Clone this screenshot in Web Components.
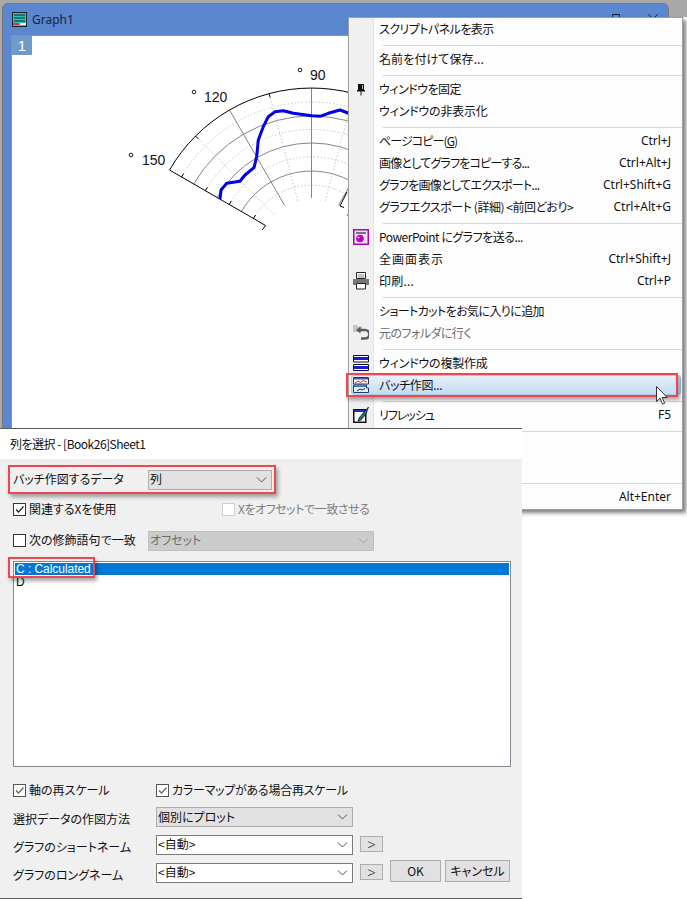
<!DOCTYPE html>
<html lang="ja"><head><meta charset="utf-8"><title>Batch plot</title>
<style>html,body{margin:0;padding:0;background:#fff}</style></head>
<body>
<desk-canvas>
  <graph-window title-text="Graph1"><polar-plot></polar-plot></graph-window>
  <context-menu>
    <menu-item style="--ls:-.55px">スクリプトパネルを表示</menu-item>
    <menu-sep></menu-sep>
    <menu-item style="--ls:.1px">名前を付けて保存...</menu-item>
    <menu-sep></menu-sep>
    <menu-item style="--ls:-.5px"><svg slot="icon" width="16" height="16" viewBox="0 0 16 16"><path d="M5 3h6v6H5z" fill="#111"/><path d="M9 4h1v4H9z" fill="#bbb"/><path d="M4 9h8v1.500H4z" fill="#111"/><path d="M7.500 10h1v4.500h-1z" fill="#222"/></svg>ウィンドウを固定</menu-item>
    <menu-item style="--ls:-.2px">ウィンドウの非表示化</menu-item>
    <menu-sep></menu-sep>
    <menu-item style="--ls:-.9px" shortcut="Ctrl+J">ページコピー(<u>G</u>)</menu-item>
    <menu-item style="--ls:-.8px" shortcut="Ctrl+Alt+J">画像としてグラフをコピーする...</menu-item>
    <menu-item style="--ls:-.7px" shortcut="Ctrl+Shift+G">グラフを画像としてエクスポート...</menu-item>
    <menu-item style="--ls:-.45px" shortcut="Ctrl+Alt+G">グラフエクスポート (詳細) &lt;前回どおり&gt;</menu-item>
    <menu-sep></menu-sep>
    <menu-item style="--ls:-.5px"><svg slot="icon" width="16" height="16" viewBox="0 0 16 16"><rect x=".75" y=".75" width="14.500" height="14.500" fill="#e9e4ef" stroke="#b000b8" stroke-width="1.500"/><rect x="3" y="3" width="10" height="2" fill="#777"/><circle cx="7" cy="9.500" r="3.800" fill="#c400c4"/><circle cx="5.500" cy="8.500" r="1" fill="#f4c0f4"/></svg>PowerPoint にグラフを送る...</menu-item>
    <menu-item style="--ls:1px" shortcut="Ctrl+Shift+J">全画面表示</menu-item>
    <menu-item style="--ls:.2px" shortcut="Ctrl+P"><svg slot="icon" width="16" height="18" viewBox="0 0 16 18"><path d="M3.500 .5h9v6h-9z" fill="#fff" stroke="#222"/><path d="M5 3h6M5 5h6" stroke="#888"/><path d="M0 7h16v6H0z" fill="#777"/><path d="M3.500 11.500h9v5.500h-9z" fill="#fff" stroke="#222"/></svg>印刷...</menu-item>
    <menu-sep></menu-sep>
    <menu-item style="--ls:-.6px">ショートカットをお気に入りに追加</menu-item>
    <menu-item style="--ls:-.55px" disabled><svg slot="icon" width="16" height="16" viewBox="0 0 16 16"><path d="M0 0h4l1 1.500h4V7H0z" fill="#c4c4c4"/><path d="M6 5h6a3 3 0 0 1 0 8.500H8" fill="none" stroke="#5c5c5c" stroke-width="2.500"/><path d="M7.500 1.500v7L3 5z" fill="#5c5c5c"/></svg>元のフォルダに行く</menu-item>
    <menu-sep></menu-sep>
    <menu-item style="--ls:-.2px"><svg slot="icon" width="16" height="16" viewBox="0 0 16 16"><path d="M.5.500h15v6.500H.5zM.5 9.500h15V15.500H.5z" fill="#fff" stroke="#111"/><path d="M1 2h14v3H1zM1 11h14v3H1z" fill="#1818e0"/></svg>ウィンドウの複製作成</menu-item>
    <menu-item style="--ls:-.3px" hot><svg slot="icon" width="16" height="16" viewBox="0 0 16 16"><path d="M.5.500h15V7H.5z" fill="#fff" stroke="#334"/><path d="M1 1h14v1.500H1z" fill="#3d5fa8"/><path d="M2 6l3-2 2.500 1.500L10 3.500l4 1.500" fill="none" stroke="#d03030"/><path d="M.5 8h13v3h2v4.500H.5z" fill="#eaf2fb" stroke="#1c3a78"/><path d="M1 8.500h12v1.500H1z" fill="#3d6fc8"/><path d="M4 14l3-2 2 1 3-1.500" fill="none" stroke="#222"/></svg>バッチ作図...</menu-item>
    <menu-sep></menu-sep>
    <menu-item style="--ls:-1px" shortcut="F5"><svg slot="icon" width="16" height="16" viewBox="0 0 16 16"><path d="M.75 2.750h12V15.250h-12z" fill="#fff" stroke="#111" stroke-width="1.500"/><path d="M1 3h11.500v2H1z" fill="#1c2ec0"/><path d="M15.500 0L11 5l-5 6-1 3 3-1 5-6z" fill="#1d6f80" stroke="#111" stroke-width=".7"/></svg>リフレッシュ</menu-item>
    <menu-sep></menu-sep>
    <menu-item></menu-item>
    <menu-item></menu-item>
    <menu-sep></menu-sep>
    <menu-item shortcut="Alt+Enter"></menu-item>
  </context-menu>
  <batch-dialog></batch-dialog>
</desk-canvas>
<script>
const def=(name,html,init)=>customElements.define(name,class extends HTMLElement{
  constructor(){super();const t=document.createElement('template');t.innerHTML=typeof html==='function'?html(this):html;
    this.attachShadow({mode:'open'}).appendChild(t.content.cloneNode(true));}
  connectedCallback(){init&&init(this)}
});
const chevron=c=>`<svg width="11" height="6" viewBox="0 0 11 6"><path d="M1 .5l4.500 4.500L10 .5" fill="none" stroke="${c}" stroke-width="1"/></svg>`;

def('desk-canvas',`<style>
:host{display:block;position:relative;width:687px;height:899px;overflow:hidden;
font:12px/16px "Noto Sans CJK JP","Noto Sans",sans-serif;font-feature-settings:"palt";color:#111;
background:linear-gradient(#a9a9a9,#a9a9a9) 0 0/100% 17px no-repeat,linear-gradient(#a9a9a9,#a9a9a9) 0 0/2px 428px no-repeat,#fff}
</style><slot></slot>`);

def('graph-window',h=>`<style>
:host{display:flex;flex-direction:column;position:absolute;left:2px;top:3px;width:667px;height:440px;box-sizing:border-box;background:#5a87d0;border:1px solid #777;border-radius:6px 6px 0 0;padding:0 1px 0 8px}
.bar{display:flex;height:31px;flex:none;align-items:center;gap:5px;padding-left:1px}
.bar b{font-weight:400;color:#15233f;flex:1;font-family:"Noto Sans",sans-serif}
.ctl{align-self:flex-start;margin-top:10px;display:flex;gap:28px;margin-right:9px}
.client{position:relative;flex:1;min-height:0;background:#fff;border:1px solid #8f8f8f;border-bottom:0}
</style>
<div class="bar"><svg width="15" height="15" viewBox="0 0 15 15"><rect x=".5" y=".5" width="14" height="14" fill="#27c4b8" stroke="#222"/><path d="M2 3h11M2 6h11M2 9h11" stroke="#123" /><path d="M1 12h6" stroke="#e03050" stroke-width="2"/><path d="M8 12h6" stroke="#dfe" stroke-width="2"/></svg>
<b>${h.getAttribute('title-text')}</b>
<span class="ctl"><svg width="8" height="10" viewBox="0 0 8 10"><path d="M.5.500h7v9h-7z" fill="none" stroke="#15233f"/></svg><svg width="10" height="10" viewBox="0 0 10 10"><path d="M.5.500l9 9M9.500.500l-9 9" stroke="#15233f"/></svg></span></div>
<div class="client"><slot></slot></div>`);

def('polar-plot',()=>{
  const cx=311.5,cy=252,P=(r,a)=>{const t=a*Math.PI/180;return [(cx+r*Math.cos(t)).toFixed(1),(cy-r*Math.sin(t)).toFixed(1)]};
  const arc=(r,a,b)=>{const s=P(r,a),e=P(r,b);return `M${s}A${r} ${r} 0 0 1 ${e}`};
  let g='';
  for(const r of [150,122.500,95,67]) g+=`<path d="${arc(r,150,30)}" fill="none" stroke="#bdbdbd" stroke-width=".9" stroke-dasharray="1.500 2"/>`;
  for(const a of [135,105,75,45]) g+=`<path d="M${P(53,a)}L${P(164,a)}" stroke="#bdbdbd" stroke-width=".9" stroke-dasharray="1.500 2"/>`;
  for(const r of [136,109,81]) g+=`<path d="${arc(r,150,30)}" fill="none" stroke="#858585"/>`;
  for(const a of [120,90,60]) g+=`<path d="M${P(54,a)}L${P(164,a)}" stroke="#858585"/>`;
  g+=`<path d="${arc(164,150,30)}" fill="none" stroke="#000"/>`;
  g+=`<path d="M${P(164,150)}L${P(53,150)}l-3.500 4.500" fill="none" stroke="#000"/>`;
  for(const r of [150,122.500,95,67]){const p=P(r,150);g+=`<path d="M${p}l2 -3.500" stroke="#000"/>`}
  for(const a of [135,105]){const s=P(164,a),e=P(160,a);g+=`<path d="M${s}L${e}" stroke="#000"/>`}
  const curve=[[660,597],[663,570],[680,550],[720,544],[735,525],[762,503],[770,470],[775,420],[790,380],[805,350],[825,335],[850,332],[880,340],[935,347],[960,349],[985,340],[1020,330],[1060,345],[1100,345]].map(p=>[(p[0]/3).toFixed(1),(p[1]/3).toFixed(1)].join(' ')).join(' L');
  g+=`<path d="M${curve}" fill="none" stroke="#0000e0" stroke-width="3" stroke-linejoin="round"/>`;
  g+=`<path d="M347 192L340 206l4 1.500" fill="none" stroke="#000"/><circle cx="347.500" cy="215" r=".8" fill="#a60"/>`;
  const lab=(x,y,t,dx,dy)=>`<circle cx="${dx}" cy="${dy}" r="1.800" fill="none" stroke="#000" stroke-width=".9"/><text x="${x}" y="${y}">${t}</text>`;
  g+=`<g font-family="Liberation Sans,Arial,sans-serif" font-size="14" fill="#111">${lab(310,80,'90',300,70)}${lab(204,102,'120',194,92)}${lab(142,165,'150',131,155)}</g>`;
  return `<style>:host{display:block;position:relative;width:100%;height:100%}
  svg{display:block;width:654px;height:406px}
  .tab{position:absolute;left:0;top:0;width:20px;height:19px;background:#6f9bc8;color:#fff;font:300 15px/19px "Liberation Sans",sans-serif;text-align:center}</style>
  <svg viewBox="12 36 654 406">${g}</svg><div class="tab">1</div>`;
});

def('context-menu',`<style>
:host{display:flex;flex-direction:column;position:absolute;left:348px;top:17px;width:335px;height:493px;box-sizing:border-box;background:linear-gradient(90deg,#f0f0f0 0,#f0f0f0 24px,#e3e3e3 24px,#e3e3e3 25px,#fdfdfd 25px);border:1px solid #a0a0a0;box-shadow:3px 3px 4px rgba(0,0,0,.5)}
</style><slot></slot>`);

def('menu-item',h=>{
  const dis=h.hasAttribute('disabled'),hot=h.hasAttribute('hot'),sc=h.getAttribute('shortcut')||'';
  return `<style>
:host{display:flex;flex:none;height:22px;align-items:center;position:relative;${dis?'color:#6d6d6d;':''}}
.bg{position:absolute;inset:1px 1px 1px 2px;border-radius:3px;${hot?'background:linear-gradient(#e6f1fb,#c3dcf3);border:1px solid #a9cbe6;':'display:none'}}
.i{position:relative;width:24px;flex:none;display:flex;justify-content:center;align-items:center}
.t{position:relative;flex:1;padding-left:6px;white-space:nowrap;letter-spacing:var(--ls,0)}
.s{position:relative;padding-right:11px;white-space:nowrap;font-family:"Noto Sans",sans-serif}
.s:empty{display:none}
</style><span class="bg"></span><span class="i"><slot name="icon"></slot></span><span class="t"><slot></slot></span><span class="s">${sc}</span>`;
});
def('menu-sep',`<style>:host{display:block;flex:none;height:8px;box-sizing:border-box;margin-left:34px;position:relative}
i{position:absolute;left:0;right:0;top:5px;height:1px;background:#d6d6d6}</style><i></i>`);

def('red-mark',`<style>:host{display:block;position:absolute;box-sizing:border-box;border:2px solid #f2454f;box-shadow:2px 3px 4px rgba(0,0,0,.35);pointer-events:none}</style>`);

def('dlg-check',h=>{
  const on=h.hasAttribute('checked'),dis=h.hasAttribute('disabled'),soft=h.hasAttribute('soft');
  const bc=dis?'#cfcfcf':(soft?'#555':'#333'),ck=soft?'#666':'#222';
  return `<style>:host{display:inline-flex;align-items:center;gap:3px;white-space:nowrap;box-sizing:border-box;padding-bottom:2px;${dis?'color:#7d7d7d;':''}}
  i{display:flex;width:13px;height:13px;box-sizing:border-box;background:#fff;border:1px solid ${bc};flex:none}
  span{letter-spacing:var(--ls,0)}</style>
  <i>${on?`<svg width="11" height="11" viewBox="0 0 11 11"><path d="M2 5.500l2.500 2.500L9.500 2.500" fill="none" stroke="${ck}" stroke-width="1.300"/></svg>`:''}</i><span><slot></slot></span>`;
});

def('dlg-select',h=>{
  const k=h.getAttribute('kind')||'btn';
  const st={btn:'background:#e1e1e1;border-color:#adadad;',off:'background:#cccccc;border-color:#bfbfbf;color:#6d6d6d;',edit:'background:#fff;border-color:#7a7a7a;'}[k];
  return `<style>:host{display:flex;box-sizing:border-box;height:20px;border:1px solid;align-items:center;justify-content:space-between;padding:0 4px 0 1px;flex:none;${st}}
  span{margin-bottom:var(--tb,2px)}svg{flex:none;align-self:center}</style><span><slot></slot></span>${chevron(k==='off'?'#a0a0a0':'#555')}`;
});

def('dlg-button',`<style>:host{display:flex;box-sizing:border-box;align-items:center;justify-content:center;background:#e1e1e1;border:1px solid #adadad;flex:none;white-space:nowrap}</style><slot></slot>`);

def('dlg-listbox',`<style>:host{display:block;box-sizing:border-box;background:#fff;border:1px solid #828790;padding:1px;height:206px}
div{height:12px;line-height:12px;padding-left:1px;font-family:"Liberation Sans",sans-serif}
.next{height:14px;line-height:14px}
.sel{background:#0078d7;color:#fff;letter-spacing:-.05px}</style><div class="sel">C : Calculated</div><div class="next">D</div>`);

def('batch-dialog',`<style>
:host{display:flex;flex-direction:column;position:absolute;left:0;top:428px;width:522px;height:471px;box-sizing:border-box;border-top:1px solid #5a5a5a;border-bottom:1px solid #5a5a5a;background:#f0f0f0}
.title{height:30px;flex:none;background:#fff;display:flex;align-items:center;padding-left:10px;letter-spacing:-.5px}
.body{flex:1;padding:11px 11px 0 13px;display:flex;flex-direction:column;position:relative}
.row{display:flex;align-items:center;height:20px;flex:none}
.lab{flex:none;white-space:nowrap;box-sizing:border-box}
.up{padding-bottom:2px}.low{padding-top:4px}
.w135{width:135px}.w143{width:143px}
.gap10{margin-top:10px}.gap11{margin-top:11px}.gap14{margin-top:14px}.gap6{margin-top:6px}.gap8{margin-top:8px}
.small{width:23px;height:16px;margin-left:7px;align-self:flex-start;margin-top:1px;font:300 15px/14px "Noto Sans",sans-serif;color:#333}
.ok{width:51px;height:22px;margin-left:7px;align-self:flex-start;margin-top:-3px}
.cancel{width:65px;height:22px;margin-left:4px;align-self:flex-start;margin-top:-3px}
red-mark.a{left:8px;top:6px;width:268px;height:29px}
red-mark.b{left:8px;top:98px;width:87px;height:21px}
</style>
<div class="title">列を選択 - [Book26]Sheet1</div>
<div class="body">
  <div class="row"><span class="lab up w135">バッチ作図するデータ</span><dlg-select style="width:124px">列</dlg-select></div>
  <div class="row gap10"><dlg-check checked style="width:209px">関連するXを使用</dlg-check><dlg-check disabled style="--ls:-.45px">Xをオフセットで一致させる</dlg-check></div>
  <div class="row gap11"><dlg-check style="width:135px">次の修飾語句で一致</dlg-check><dlg-select kind="off" style="width:226px">オフセット</dlg-select></div>
  <dlg-listbox class="gap10"></dlg-listbox>
  <div class="row gap14"><dlg-check checked soft style="width:143px">軸の再スケール</dlg-check><dlg-check checked soft style="--ls:-.25px">カラーマップがある場合再スケール</dlg-check></div>
  <div class="row gap6"><span class="lab low w143">選択データの作図方法</span><dlg-select style="width:197px;--tb:0px">個別にプロット</dlg-select></div>
  <div class="row gap8"><span class="lab low w143">グラフのショートネーム</span><dlg-select kind="edit" style="width:197px">&lt;自動&gt;</dlg-select><dlg-button class="small">&gt;</dlg-button></div>
  <div class="row gap8"><span class="lab low w143">グラフのロングネーム</span><dlg-select kind="edit" style="width:197px">&lt;自動&gt;</dlg-select><dlg-button class="small">&gt;</dlg-button><dlg-button class="ok">OK</dlg-button><dlg-button class="cancel">キャンセル</dlg-button></div>
  <red-mark class="a"></red-mark><red-mark class="b"></red-mark>
</div>`);

/* page-level overlays */
const canvas=document.querySelector('desk-canvas');
const mark=document.createElement('red-mark');mark.style.cssText='left:346px;top:373px;width:332px;height:24px';canvas.appendChild(mark);
def('mouse-cursor',`<style>:host{display:block;position:absolute;left:656px;top:386px;width:12px;height:19px}</style><svg width="12" height="19" viewBox="0 0 12 19"><path d="M.5.500v15l3.500-3.300 2.500 6 2.200-1-2.500-5.700h5z" fill="#fff" stroke="#333"/></svg>`);
canvas.appendChild(document.createElement('mouse-cursor'));
</script>
</body></html>
